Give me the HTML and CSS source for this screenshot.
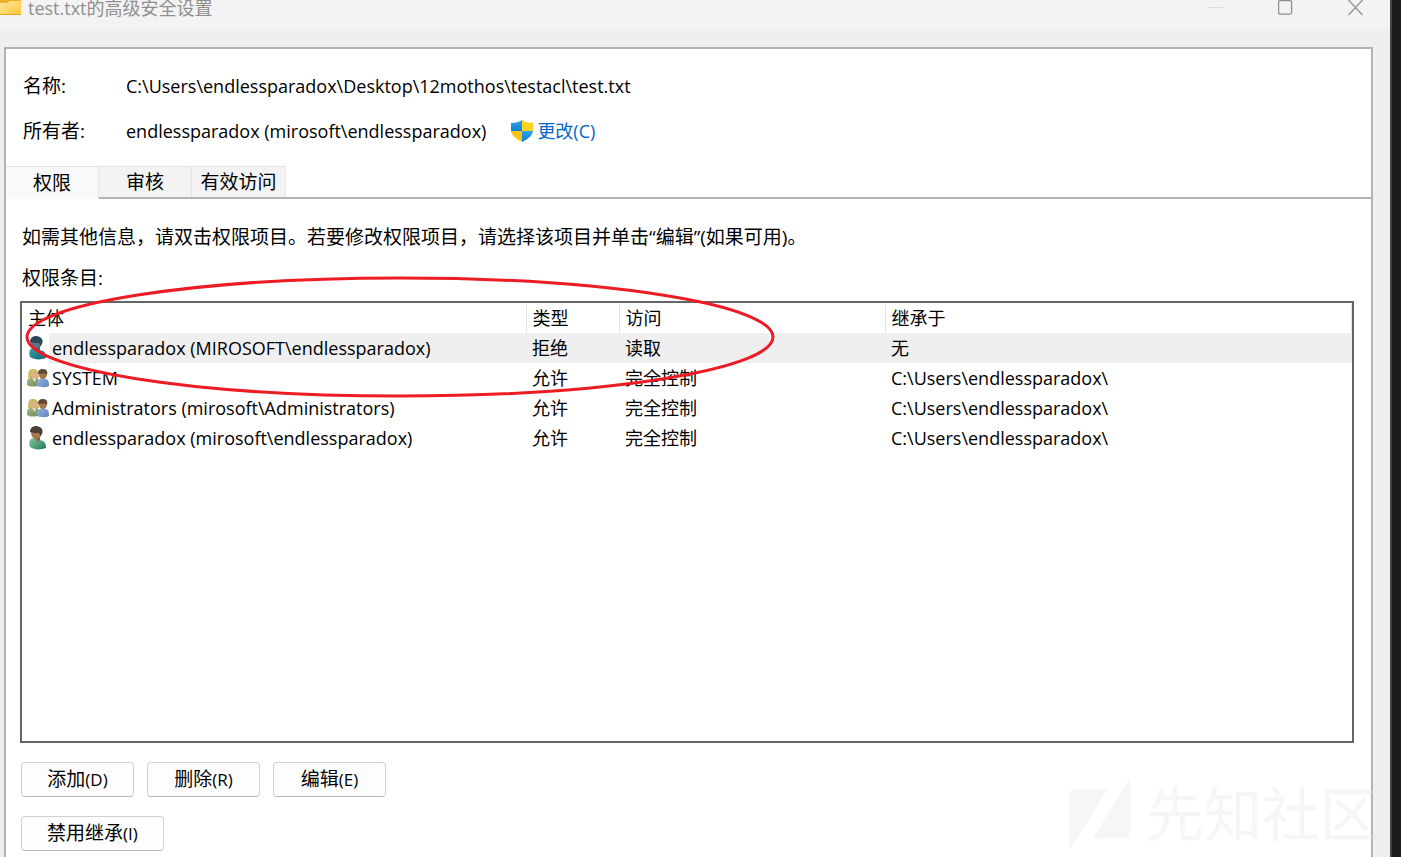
FILE: index.html
```html
<!DOCTYPE html>
<html lang="zh-CN">
<head>
    <meta charset="UTF-8">
    <meta name="viewport" content="width=device-width, initial-scale=1.0">
    <title>test.txt的高级安全设置</title>
    <link rel="stylesheet" href="styles.css">
</head>
<body>
    <!-- Shared icon drawings -->
    <svg class="sprite" aria-hidden="true">
        <defs>
            <linearGradient id="folder-fill" x1="0" y1="0" x2="1" y2="1">
                <stop offset="0" stop-color="#ffe7a0"/>
                <stop offset="1" stop-color="#fcc630"/>
            </linearGradient>
            <linearGradient id="shirt-green" x1="0" y1="0" x2="1" y2="1">
                <stop offset="0" stop-color="#8cc9a8"/>
                <stop offset="1" stop-color="#217852"/>
            </linearGradient>
            <linearGradient id="shirt-teal" x1="0" y1="0" x2="1" y2="1">
                <stop offset="0" stop-color="#3f9fa5"/>
                <stop offset="1" stop-color="#0d6b73"/>
            </linearGradient>
            <linearGradient id="shirt-blue" x1="0" y1="0" x2="1" y2="1">
                <stop offset="0" stop-color="#8fb4de"/>
                <stop offset="1" stop-color="#5f88bf"/>
            </linearGradient>
            <linearGradient id="shirt-olive" x1="0" y1="0" x2="1" y2="1">
                <stop offset="0" stop-color="#a9b98a"/>
                <stop offset="1" stop-color="#6f8656"/>
            </linearGradient>
            <linearGradient id="shield-blue" x1="0" y1="0" x2="0" y2="1">
                <stop offset="0" stop-color="#2ba5e6"/>
                <stop offset="1" stop-color="#0f7fd0"/>
            </linearGradient>
        </defs>
        <symbol id="icon-user" viewBox="0 0 22 24">
            <path d="M3 21c-1-3-1-7 1-8l4-2 5 3 3 1c2 1 3 3 3 7-5 2-12 2-16-1z" fill="url(#shirt-green)"/>
            <path d="M7 11l6-2v5l-2 2z" fill="#8f5f40"/>
            <path d="M4 6c0 4 2 7 5 7s5-3 5-7-10-4-10 0z" fill="#a8754f"/>
            <path d="M3 6C3 2 6 0 9 0c5 0 8 4 6 8l-2 3c0-2 0-3-1-4-3 0-6 0-9-1z" fill="#4a4038"/>
        </symbol>
        <symbol id="icon-user-selected" viewBox="0 0 22 24">
            <path d="M3 21c-1-3-1-7 1-8l4-2 5 3 3 1c2 1 3 3 3 7-5 2-12 2-16-1z" fill="url(#shirt-teal)"/>
            <path d="M7 11l6-2v5l-2 2z" fill="#4c6576"/>
            <path d="M4 6c0 4 2 7 5 7s5-3 5-7-10-4-10 0z" fill="#5d7484"/>
            <path d="M3 6C3 2 6 0 9 0c5 0 8 4 6 8l-2 3c0-2 0-3-1-4-3 0-6 0-9-1z" fill="#2b4655"/>
        </symbol>
        <symbol id="icon-group" viewBox="0 0 22 24">
            <path d="M1 12C1 5 2 3 6 3s6 2 6 9z" fill="#cdbb6a"/>
            <path d="M0 19c0-5 0-6 3-7l3-1 4 1c2 1 2 3 2 7-3 2-9 2-12 0z" fill="url(#shirt-olive)"/>
            <path d="M5 12h4l-1 4z" fill="#f0e6d8"/>
            <path d="M4 8c0 3 2 4 3 5 2-1 3-2 3-5-1-3-5-3-6 0z" fill="#dcb287"/>
            <path d="M10 20c-1-4 0-6 3-7l3-1 3 1c3 1 3 4 3 7-4 2-9 1-12 0z" fill="url(#shirt-blue)"/>
            <path d="M12 8c0 4 2 5 4 5s4-2 4-5-8-4-8 0z" fill="#a8754f"/>
            <path d="M11 8c0-4 2-5 5-5 4 0 5 3 4 6l-1-1c-2-1-5 0-8 0z" fill="#5f4a37"/>
        </symbol>
    </svg>

    <main class="window">
        <header class="titlebar">
            <svg class="folder" viewBox="0 0 21 16" aria-hidden="true">
                <path d="M0 0h21v4H0z" fill="#f0b02c"/>
                <path d="M0 3h7l3-2h11v14H0z" fill="url(#folder-fill)"/>
                <path d="M0 14h21v1H0z" fill="#e3a21a"/>
            </svg>
            <h1 class="title">test.txt的高级安全设置</h1>
            <div class="controls">
                <button class="control" type="button" aria-label="最小化" disabled>
                    <svg viewBox="0 0 16 16"><path d="M0 7.500h15" stroke="#dcdcdc"/></svg>
                </button>
                <button class="control" type="button" aria-label="最大化">
                    <svg viewBox="0 0 16 16"><rect x="0.600" y="0.600" width="13" height="13.500" rx="1.500" fill="none" stroke="#8f8f8f" stroke-width="1.300"/></svg>
                </button>
                <button class="control" type="button" aria-label="关闭">
                    <svg viewBox="0 0 16 16"><path d="M0.500 0l14 15M14.500 0l-14 15" stroke="#8f8f8f" stroke-width="1.200"/></svg>
                </button>
            </div>
        </header>

        <section class="panel">
            <dl class="fields">
                <div class="field">
                    <dt>名称:</dt>
                    <dd>C:\Users\endlessparadox\Desktop\12mothos\testacl\test.txt</dd>
                </div>
                <div class="field">
                    <dt>所有者:</dt>
                    <dd>endlessparadox (mirosoft\endlessparadox)</dd>
                    <dd>
                        <a class="change" href="#">
                            <svg class="shield" viewBox="0 0 22 22" aria-hidden="true">
                                <path d="M11 0v11H0V3c5 0 8-1 11-3z" fill="url(#shield-blue)"/>
                                <path d="M11 0c3 2 6 3 11 3v8H11z" fill="#fdd21c"/>
                                <path d="M0 11h11v11C5 19 1 16 0 11z" fill="#fbc31a"/>
                                <path d="M22 11c-1 5-5 8-11 11V11z" fill="url(#shield-blue)"/>
                            </svg>
                            更改(C)
                        </a>
                    </dd>
                </div>
            </dl>

            <div class="tabs" role="tablist">
                <button class="tab active" type="button" role="tab" aria-selected="true">权限</button>
                <button class="tab" type="button" role="tab" aria-selected="false">审核</button>
                <button class="tab" type="button" role="tab" aria-selected="false">有效访问</button>
            </div>

            <div class="content">
                <p class="hint">如需其他信息，请双击权限项目。若要修改权限项目，请选择该项目并单击“编辑”(如果可用)。</p>
                <p class="label" id="entries-label">权限条目:</p>

                <div class="list">
                    <table class="entries" aria-labelledby="entries-label">
                        <colgroup>
                            <col class="col-principal">
                            <col class="col-type">
                            <col class="col-access">
                            <col>
                        </colgroup>
                        <thead>
                            <tr><th>主体</th><th>类型</th><th>访问</th><th>继承于</th></tr>
                        </thead>
                        <tbody>
                            <tr class="selected">
                                <td class="principal"><div class="who"><svg class="icon"><use href="#icon-user-selected"/></svg><span>endlessparadox (MIROSOFT\endlessparadox)</span></div></td>
                                <td>拒绝</td><td>读取</td><td>无</td>
                            </tr>
                            <tr>
                                <td class="principal"><div class="who"><svg class="icon"><use href="#icon-group"/></svg><span>SYSTEM</span></div></td>
                                <td>允许</td><td>完全控制</td><td>C:\Users\endlessparadox\</td>
                            </tr>
                            <tr>
                                <td class="principal"><div class="who"><svg class="icon"><use href="#icon-group"/></svg><span>Administrators (mirosoft\Administrators)</span></div></td>
                                <td>允许</td><td>完全控制</td><td>C:\Users\endlessparadox\</td>
                            </tr>
                            <tr>
                                <td class="principal"><div class="who"><svg class="icon"><use href="#icon-user"/></svg><span>endlessparadox (mirosoft\endlessparadox)</span></div></td>
                                <td>允许</td><td>完全控制</td><td>C:\Users\endlessparadox\</td>
                            </tr>
                        </tbody>
                    </table>
                    <!-- Hand-drawn highlight over the denied entry -->
                    <svg class="mark" viewBox="0 0 750 122" aria-hidden="true">
                        <ellipse cx="375" cy="61" rx="373" ry="59" fill="none" stroke="#ed1c24" stroke-width="3"/>
                    </svg>
                </div>

                <div class="actions">
                    <button class="button" type="button">添加<span class="key">(D)</span></button>
                    <button class="button" type="button">删除<span class="key">(R)</span></button>
                    <button class="button" type="button">编辑<span class="key">(E)</span></button>
                </div>
                <div class="actions">
                    <button class="button wide" type="button">禁用继承<span class="key">(I)</span></button>
                </div>
            </div>
        </section>
    </main>

    <div class="watermark">
        <svg class="watermark-logo" viewBox="0 0 60 72" aria-hidden="true">
            <path d="M0 12h37L0 72zM60 0v60H23z" fill="currentColor"/>
        </svg>
        <span>先知社区</span>
    </div>
</body>
</html>
```
FILE: styles.css
```css
* {
    box-sizing: border-box;
}

body {
    margin: 0;
    display: flex;
    height: 100vh;
    overflow: hidden;
    background-color: #1c1c1c;
    color: #000;
    font-family: "Open Sans", "Noto Sans CJK SC", sans-serif;
    font-size: 18px;
    line-height: 24px;
}

button {
    font: inherit;
    color: inherit;
}

h1, p, dl, dd {
    margin: 0;
}

.sprite {
    position: absolute;
    width: 0;
    height: 0;
}

.window {
    flex: 1;
    display: flex;
    flex-direction: column;
    margin-right: 9px;
    border-right: 2px solid #444;
    background-color: #efefef;
}

/* Title bar */
.titlebar {
    display: flex;
    align-items: flex-start;
    height: 30px;
    background-color: #f3f3f3;
}

.folder {
    width: 21px;
    height: 16px;
}

.title {
    flex: 1;
    margin-left: 7px;
    font-size: 18px;
    font-weight: 400;
    line-height: 16px;
    color: #8f8f8f;
}

.controls {
    display: flex;
    gap: 54px;
    padding-right: 26px;
}

.control {
    width: 16px;
    height: 16px;
    padding: 0;
    border: none;
    background: none;
}

.control svg {
    display: block;
    width: 16px;
    height: 16px;
}

/* Main panel */
.panel {
    flex: 1;
    display: flex;
    flex-direction: column;
    margin: 17px 17px 0 4px;
    padding-top: 14px;
    border: 2px solid #b3b3b3;
    border-bottom: none;
    background-color: #fff;
}

.field {
    display: flex;
    align-items: center;
    height: 45px;
    padding-left: 17px;
}

.field dt {
    width: 103px;
    font-size: 19px;
}

.change {
    display: flex;
    align-items: center;
    gap: 4px;
    margin-left: 25px;
    color: #0066cc;
    text-decoration: none;
}

.shield {
    width: 22px;
    height: 22px;
}

/* Tabs */
.tabs {
    display: flex;
    margin-top: 13px;
    border-bottom: 2px solid #b3b3b3;
}

.tab {
    width: 93px;
    height: 31px;
    padding: 0;
    border: 1px solid #e5e5e5;
    border-left: none;
    border-bottom: none;
    background-color: #f3f3f3;
    font-size: 19px;
}

.tab:last-child {
    width: 94px;
}

.tab.active {
    height: 33px;
    margin-bottom: -2px;
    background-color: #f9f9f9;
}

.content {
    flex: 1;
    display: flex;
    flex-direction: column;
    padding: 26px 17px 6px 14px;
}

.hint,
.label {
    padding-left: 2px;
    font-size: 19px;
}

.label {
    margin-top: 17px;
}

/* Permission entries */
.list {
    position: relative;
    flex: 1;
    margin-top: 11px;
    border: 2px solid #666;
}

.entries {
    width: 100%;
    table-layout: fixed;
    border-collapse: collapse;
}

.col-principal {
    width: 504px;
}

.col-type {
    width: 93px;
}

.col-access {
    width: 266px;
}

.entries th,
.entries td {
    height: 30px;
    padding: 0 6px;
    font-weight: 400;
    text-align: left;
    white-space: nowrap;
}

.entries th {
    border-right: 1px solid #e5e5e5;
}

.entries .principal {
    padding: 0;
}

.selected td,
.selected .who span {
    background-color: #efefef;
}

.entries .selected .principal {
    background: none;
}

.who {
    display: flex;
    align-items: center;
    padding-left: 5px;
}

.who span {
    flex: 1;
    padding-left: 3px;
    line-height: 30px;
}

.icon {
    width: 22px;
    height: 24px;
}

.mark {
    position: absolute;
    top: -27px;
    left: 3px;
    width: 750px;
    height: 122px;
}

/* Buttons */
.actions {
    display: flex;
    gap: 13px;
    margin-top: 19px;
    padding-left: 1px;
}

.button {
    width: 113px;
    height: 35px;
    padding: 0;
    border: 1px solid #d0d0d0;
    border-bottom-color: #bababa;
    border-radius: 4px;
    background-color: #fdfdfd;
    font-size: 19px;
}

.button.wide {
    width: 143px;
}

.key {
    font-size: 17px;
}

/* Watermark in the lower right corner */
.watermark {
    position: fixed;
    right: 23px;
    bottom: 7px;
    display: flex;
    align-items: center;
    gap: 16px;
    color: rgba(225, 225, 225, 0.3);
    font-size: 58px;
    line-height: 72px;
    pointer-events: none;
}

.watermark-logo {
    width: 60px;
    height: 72px;
}
```
